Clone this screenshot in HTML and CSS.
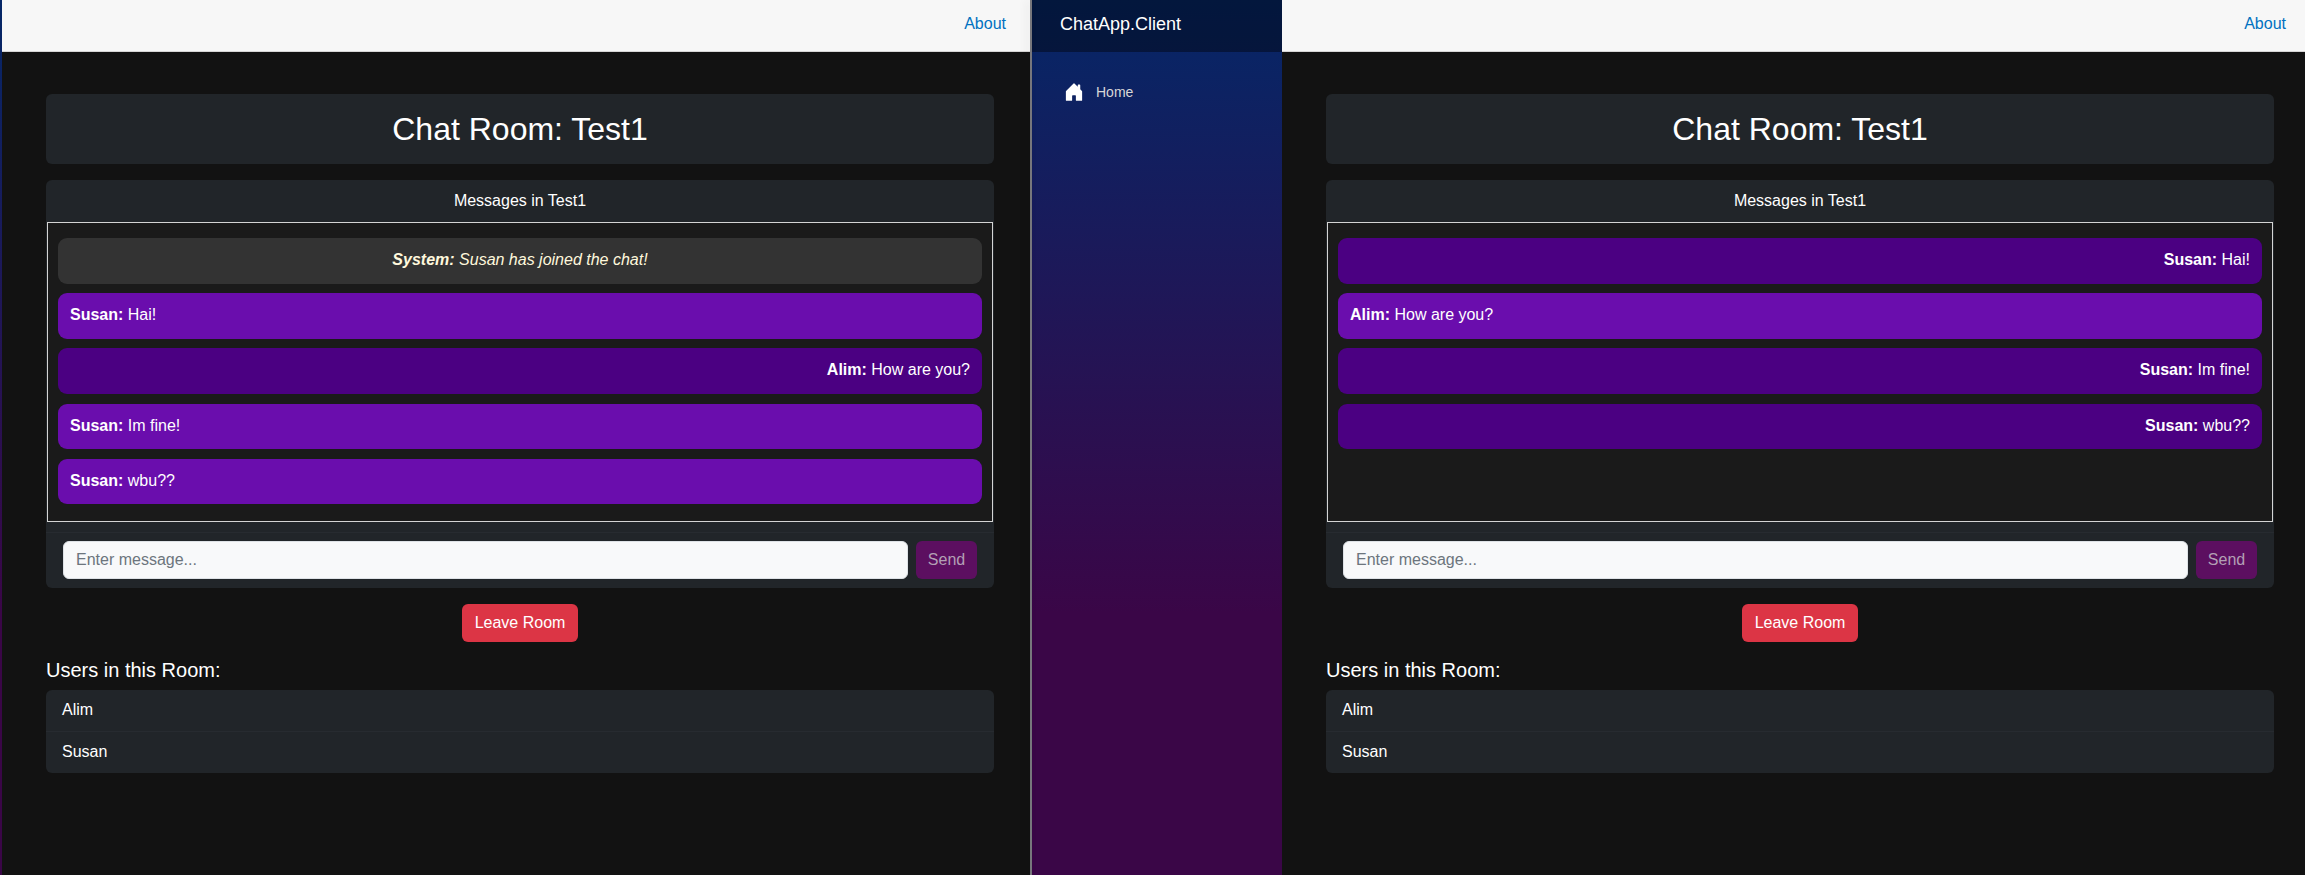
FILE: index.html
```html
<!DOCTYPE html>
<html lang="en">
<head>
  <meta charset="UTF-8">
  <title>ChatApp.Client</title>
  <link rel="stylesheet" href="styles.css">
</head>
<body>

  <div class="desktop">

    <!-- first browser window, sidebar scrolled off -->
    <div class="sidebar-sliver"></div>
    <main class="main">
      <div class="top-bar"><a href="#">About</a></div>
      <div class="chat-page">
        <div class="card room-title"><h2>Chat Room: Test1</h2></div>
        <div class="card chat-card">
          <div class="chat-header">Messages in Test1</div>
          <div class="chat-box">
            <div class="msg msg-system"><strong>System:</strong> Susan has joined the chat!</div>
            <div class="msg msg-left"><strong>Susan:</strong> Hai!</div>
            <div class="msg msg-right"><strong>Alim:</strong> How are you?</div>
            <div class="msg msg-left"><strong>Susan:</strong> Im fine!</div>
            <div class="msg msg-left"><strong>Susan:</strong> wbu??</div>
          </div>
          <div class="chat-footer">
            <input type="text" class="msg-input" placeholder="Enter message...">
            <button class="btn-send" disabled>Send</button>
          </div>
        </div>
        <div class="leave-row"><button class="btn-leave">Leave Room</button></div>
        <h5 class="users-title">Users in this Room:</h5>
        <ul class="users">
          <li>Alim</li>
          <li>Susan</li>
        </ul>
      </div>
    </main>

    <div class="divider"></div>

    <!-- second browser window -->
    <nav class="sidebar">
      <div class="brand">ChatApp.Client</div>
      <a class="nav-link" href="#">
        <svg class="home-icon" viewBox="0 0 16 16" fill="currentColor"><path d="M6.5 14.5v-3.505c0-.245.25-.495.5-.495h2c.25 0 .5.25.5.5v3.5a.5.5 0 0 0 .5.5h4a.5.5 0 0 0 .5-.5v-7a.5.5 0 0 0-.146-.354L13 5.793V2.5a.5.5 0 0 0-.5-.5h-1a.5.5 0 0 0-.5.5v1.293L8.354 1.146a.5.5 0 0 0-.708 0l-6 6A.5.5 0 0 0 1.5 7.5v7a.5.5 0 0 0 .5.5h4a.5.5 0 0 0 .5-.5z"/></svg>
        Home
      </a>
    </nav>
    <main class="main">
      <div class="top-bar"><a href="#">About</a></div>
      <div class="chat-page">
        <div class="card room-title"><h2>Chat Room: Test1</h2></div>
        <div class="card chat-card">
          <div class="chat-header">Messages in Test1</div>
          <div class="chat-box">
            <div class="msg msg-right"><strong>Susan:</strong> Hai!</div>
            <div class="msg msg-left"><strong>Alim:</strong> How are you?</div>
            <div class="msg msg-right"><strong>Susan:</strong> Im fine!</div>
            <div class="msg msg-right"><strong>Susan:</strong> wbu??</div>
          </div>
          <div class="chat-footer">
            <input type="text" class="msg-input" placeholder="Enter message...">
            <button class="btn-send" disabled>Send</button>
          </div>
        </div>
        <div class="leave-row"><button class="btn-leave">Leave Room</button></div>
        <h5 class="users-title">Users in this Room:</h5>
        <ul class="users">
          <li>Alim</li>
          <li>Susan</li>
        </ul>
      </div>
    </main>

  </div>

</body>
</html>
```

FILE: styles.css
```css
html, body {
  height: 100%;
  margin: 0;
}
body {
  font-family: "Liberation Sans", Arial, sans-serif;
  font-size: 16px;
  line-height: 24px;
  color: #fff;
  background: #121212;
  overflow: hidden;
}
.desktop {
  display: flex;
  height: 875px;
  width: 2305px;
  overflow: hidden;
}
.sidebar-sliver {
  flex: none;
  width: 2px;
  background: linear-gradient(180deg, #052767 0%, #3a0647 70%);
}
.divider {
  flex: none;
  width: 2px;
  background: #77777c;
  box-shadow: -3px 0 8px rgba(0,0,0,0.12);
  position: relative;
}
.main {
  flex: none;
  width: 1028px;
}
.top-bar {
  display: flex;
  justify-content: flex-end;
  height: 51px;
  padding: 0 24px;
  line-height: 47px;
  background: #f7f7f7;
  border-bottom: 1px solid #d6d5d5;
}
.top-bar a {
  color: #0071c1;
  text-decoration: none;
}
.chat-page {
  width: 948px;
  padding: 42px 36px 0 44px;
}
.card {
  background: #212529;
  border-radius: 6px;
}
.room-title {
  padding: 16px;
  margin-bottom: 16px;
  text-align: center;
}
.room-title h2 {
  margin: 0;
  font-size: 32px;
  font-weight: 400;
  line-height: 38px;
}
.chat-header {
  height: 42px;
  line-height: 42px;
  text-align: center;
}
.chat-box {
  height: 268px;
  margin: 0 1px;
  padding: 15px 10px;
  background: #1a1a1a;
  border: 1px solid #d4d4d4;
  overflow: hidden;
}
.msg {
  height: 45.6px;
  box-sizing: border-box;
  padding: 10px 12px;
  margin-bottom: 9.6px;
  border-radius: 9px;
}
.msg-left {
  background: #6a0dad;
}
.msg-right {
  background: #4b0082;
  text-align: right;
}
.msg-system {
  background: #333;
  color: #fff8dc;
  font-style: italic;
  text-align: center;
}
.chat-footer {
  display: flex;
  gap: 8px;
  margin-top: 10px;
  padding: 8px 17px 9px 17px;
  border-top: 1px solid #272b30;
}
.msg-input {
  flex: 1;
  height: 38px;
  box-sizing: border-box;
  padding: 6px 12px;
  font-family: inherit;
  font-size: 16px;
  background: #f8f9fa;
  border: 1px solid #dee2e6;
  border-radius: 6px;
}
.msg-input::placeholder {
  color: #6c757d;
}
.btn-send {
  width: 61px;
  height: 38px;
  padding: 0;
  font-family: inherit;
  font-size: 16px;
  color: #b3a0b5;
  background: #5c0f60;
  border: none;
  border-radius: 6px;
}
.leave-row {
  margin-top: 16px;
  text-align: center;
}
.btn-leave {
  width: 116px;
  height: 38px;
  padding: 0;
  font-family: inherit;
  font-size: 16px;
  color: #fff;
  background: #dc3545;
  border: none;
  border-radius: 6px;
}
.users-title {
  margin: 16px 0 8px;
  font-size: 20px;
  font-weight: 400;
  line-height: 24px;
}
.users {
  list-style: none;
  margin: 0;
  padding: 0;
  background: #212529;
  border-radius: 6px;
}
.users li {
  padding: 8px 16px 9px;
  border-top: 1px solid #272b30;
}
.users li:first-child {
  border-top: none;
}
.sidebar {
  flex: none;
  width: 250px;
  background: linear-gradient(180deg, #052767 0%, #3a0647 70%);
}
.brand {
  height: 52px;
  padding-left: 28px;
  font-size: 18px;
  line-height: 48px;
  background: rgba(0,0,0,0.4);
}
.nav-link {
  display: flex;
  align-items: center;
  margin: 17px 0 0 32px;
  height: 46px;
  font-size: 14px;
  color: #d7d7d7;
  text-decoration: none;
}
.home-icon {
  width: 20px;
  height: 20px;
  margin-right: 12px;
  color: #fff;
}
```
